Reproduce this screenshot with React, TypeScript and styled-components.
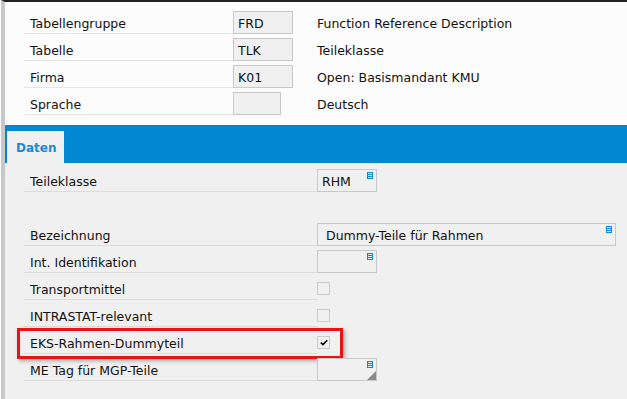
import styled, { createGlobalStyle } from 'styled-components';

const GlobalStyle = createGlobalStyle`
  html, body {
    margin: 0;
    padding: 0;
    background: #ffffff;
    overflow: hidden;
  }
  body {
    font-family: "DejaVu Sans", Verdana, sans-serif;
    font-size: 12.5px;
    color: #111;
  }
`;

const Frame = styled.div`
  width: 622px;
  height: 397px;
  margin-left: 1px;
  border-top: 2px solid #222;
  border-left: 4px solid #c8c8c8;
  display: flex;
  flex-direction: column;
`;

const Header = styled.div`
  background: #fcfcfc;
  padding: 5px 0 10px 19px;
`;

const TabBar = styled.div`
  height: 38px;
  background: #0088d2;
  display: flex;
  align-items: flex-end;
  padding-left: 2px;
`;

const Tab = styled.div`
  width: 57px;
  height: 32px;
  background: #f0f0f0;
  color: #1a8ad6;
  font-weight: bold;
  font-size: 12px;
  display: flex;
  align-items: center;
  padding: 2px 0 0 9px;
  box-sizing: border-box;
`;

const Body = styled.div`
  flex: 1;
  background: #f0f0f0;
  padding: 2px 0 0 19px;
`;

const Row = styled.div<{ $labelWidth: number }>`
  position: relative;
  height: 27px;
  display: grid;
  grid-template-columns: ${(p) => p.$labelWidth}px 84px 1fr;
  align-items: end;
`;

const Label = styled.div<{ $line: string }>`
  height: 20px;
  padding-top: 2px;
  line-height: 22px;
  padding-left: 6px;
  border-bottom: 1px solid ${(p) => p.$line};
  white-space: nowrap;
`;

const Field = styled.div<{ $width: number }>`
  position: relative;
  width: ${(p) => p.$width}px;
  height: 23px;
  box-sizing: border-box;
  border: 1px solid #c8c8c8;
  background: #f0f0f0;
  line-height: 23px;
  padding-left: 4px;
  white-space: nowrap;
`;

const Desc = styled.div`
  height: 21px;
  padding-top: 2px;
  line-height: 22px;
  white-space: nowrap;
`;

const ListIcon = styled.svg`
  position: absolute;
  top: 2px;
  right: 3px;
`;

const Corner = styled.div`
  position: absolute;
  right: 0;
  bottom: 0;
  width: 0;
  height: 0;
  border-left: 9px solid transparent;
  border-bottom: 9px solid #8a8a8a;
`;

const CheckCell = styled.div`
  height: 23px;
  display: flex;
  align-items: center;
`;

const CheckBox = styled.div`
  width: 13px;
  height: 13px;
  box-sizing: border-box;
  border: 1px solid #cbcbcb;
  background: #f0f0f0;
  display: flex;
  align-items: center;
  justify-content: center;
`;

const Highlight = styled.div`
  position: absolute;
  left: -7px;
  top: 1px;
  width: 326px;
  height: 31px;
  box-sizing: border-box;
  border: 3px solid #ee1111;
  box-shadow: 2px 2px 4px rgba(0, 0, 0, 0.3);
  pointer-events: none;
`;

const Spacer = styled.div`
  height: 27px;
`;

function ListGlyph() {
  return (
    <ListIcon width="6" height="7" viewBox="0 0 6 7">
      <rect x="0.5" y="0.5" width="5" height="6" fill="none" stroke="#0a8ad6" />
      <rect x="1" y="2" width="4" height="1" fill="#0a8ad6" />
      <rect x="1" y="4" width="4" height="1" fill="#0a8ad6" />
    </ListIcon>
  );
}

type HeaderRow = { label: string; value: string; width: number; desc: string };

const headerRows: HeaderRow[] = [
  { label: 'Tabellengruppe', value: 'FRD', width: 60, desc: 'Function Reference Description' },
  { label: 'Tabelle', value: 'TLK', width: 60, desc: 'Teileklasse' },
  { label: 'Firma', value: 'K01', width: 60, desc: 'Open: Basismandant KMU' },
  { label: 'Sprache', value: '', width: 48, desc: 'Deutsch' },
];

function App() {
  const line = '#dcdcdc';
  return (
    <>
      <GlobalStyle />
      <Frame>
        <Header>
          {headerRows.map((r) => (
            <Row key={r.label} $labelWidth={209}>
              <Label $line="#e6e6e6">{r.label}</Label>
              <Field $width={r.width}>{r.value}</Field>
              <Desc>{r.desc}</Desc>
            </Row>
          ))}
        </Header>
        <TabBar>
          <Tab>Daten</Tab>
        </TabBar>
        <Body>
          <Row $labelWidth={293}>
            <Label $line={line}>Teileklasse</Label>
            <Field $width={60}>
              RHM
              <ListGlyph />
            </Field>
          </Row>
          <Spacer />
          <Row $labelWidth={293}>
            <Label $line={line}>Bezeichnung</Label>
            <Field $width={299} style={{ paddingLeft: 8 }}>
              Dummy-Teile für Rahmen
              <ListGlyph />
            </Field>
          </Row>
          <Row $labelWidth={293}>
            <Label $line={line}>Int. Identifikation</Label>
            <Field $width={60}>
              <ListGlyph />
            </Field>
          </Row>
          <Row $labelWidth={293}>
            <Label $line={line}>Transportmittel</Label>
            <CheckCell>
              <CheckBox />
            </CheckCell>
          </Row>
          <Row $labelWidth={293}>
            <Label $line={line}>INTRASTAT-relevant</Label>
            <CheckCell>
              <CheckBox />
            </CheckCell>
          </Row>
          <Row $labelWidth={293}>
            <Label $line={line}>EKS-Rahmen-Dummyteil</Label>
            <CheckCell>
              <CheckBox>
                <svg width="8" height="7" viewBox="0 0 8 7">
                  <path d="M0.8 3.6 L3 5.6 L7.2 1.2" fill="none" stroke="#000" strokeWidth="1.6" />
                </svg>
              </CheckBox>
            </CheckCell>
            <Highlight />
          </Row>
          <Row $labelWidth={293}>
            <Label $line={line}>ME Tag für MGP-Teile</Label>
            <Field $width={60}>
              <ListGlyph />
              <Corner />
            </Field>
          </Row>
        </Body>
      </Frame>
    </>
  );
}

export default App;
